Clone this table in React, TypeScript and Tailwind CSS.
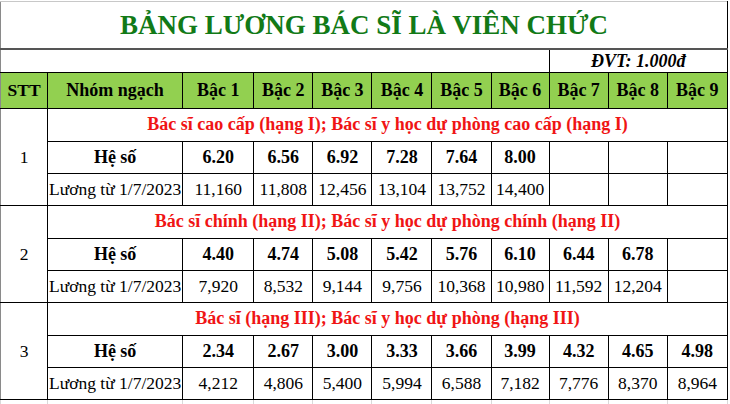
import React from "react";

type Group = {
  stt: string;
  title: string;
  heSo: string[];
  luong: string[];
};

const groups: Group[] = [
  {
    stt: "1",
    title: "Bác sĩ cao cấp (hạng I); Bác sĩ y học dự phòng cao cấp (hạng I)",
    heSo: ["6.20", "6.56", "6.92", "7.28", "7.64", "8.00", "", "", ""],
    luong: ["11,160", "11,808", "12,456", "13,104", "13,752", "14,400", "", "", ""],
  },
  {
    stt: "2",
    title: "Bác sĩ chính (hạng II); Bác sĩ y học dự phòng chính (hạng II)",
    heSo: ["4.40", "4.74", "5.08", "5.42", "5.76", "6.10", "6.44", "6.78", ""],
    luong: ["7,920", "8,532", "9,144", "9,756", "10,368", "10,980", "11,592", "12,204", ""],
  },
  {
    stt: "3",
    title: "Bác sĩ (hạng III); Bác sĩ y học dự phòng (hạng III)",
    heSo: ["2.34", "2.67", "3.00", "3.33", "3.66", "3.99", "4.32", "4.65", "4.98"],
    luong: ["4,212", "4,806", "5,400", "5,994", "6,588", "7,182", "7,776", "8,370", "8,964"],
  },
];

const colWidths = [47, 135, 71, 59, 59, 60, 59, 58, 59, 59, 60];
const bacs = ["Bậc 1", "Bậc 2", "Bậc 3", "Bậc 4", "Bậc 5", "Bậc 6", "Bậc 7", "Bậc 8", "Bậc 9"];

export default function App() {
  return (
    <div className="w-[730px] h-[404px] bg-white overflow-hidden pt-[1px] font-['Liberation_Serif',serif] text-black">
      <table className="table-fixed border-collapse w-[728px]">
        <colgroup>
          {colWidths.map((w, i) => (
            <col key={i} style={{ width: w }} />
          ))}
        </colgroup>
        <tbody>
          {/* Title */}
          <tr className="h-[47px]">
            <td
              colSpan={11}
              className="border-t border-t-[#c8c8c8] border-l border-l-[#8a8a8a] border-r border-r-black border-b-2 border-b-[#555] text-center align-middle text-[27px] font-bold text-[#127a17] leading-none pt-[2px]"
            >
              BẢNG LƯƠNG BÁC SĨ LÀ VIÊN CHỨC
            </td>
          </tr>

          {/* Unit row */}
          <tr className="h-[24px]">
            <td colSpan={8} className="border-l border-l-[#8a8a8a] border-b border-b-black" />
            <td
              colSpan={3}
              className="border-l border-black border-r border-b text-center text-[18px] font-bold italic leading-none"
            >
              ĐVT: 1.000đ
            </td>
          </tr>

          {/* Header */}
          <tr className="h-[36px] bg-[#92d050]">
            <td className="border border-black border-l-[#8a8a8a] text-center font-bold text-[17.5px]">STT</td>
            <td className="border border-black text-center font-bold text-[18px]">Nhóm ngạch</td>
            {bacs.map((b) => (
              <td key={b} className="border border-black text-center font-bold text-[18px] whitespace-nowrap">
                {b}
              </td>
            ))}
          </tr>

          {groups.map((g) => (
            <React.Fragment key={g.stt}>
              <tr className="h-[33px]">
                <td
                  rowSpan={3}
                  className="border border-black border-l-[#8a8a8a] text-center align-middle text-[17.5px] bg-white"
                >
                  {g.stt}
                </td>
                <td
                  colSpan={10}
                  className="border border-black text-center text-[18px] font-bold text-[#f01414] pb-[2px] whitespace-nowrap"
                >
                  {g.title}
                </td>
              </tr>
              <tr className="h-[32px]">
                <td className="border border-black text-center font-bold text-[18px]">Hệ số</td>
                {g.heSo.map((v, i) => (
                  <td key={i} className="border border-black text-center font-bold text-[18px]">
                    {v}
                  </td>
                ))}
              </tr>
              <tr className="h-[32px]">
                <td className="border border-black text-left pl-[1px] text-[17.5px] whitespace-nowrap">
                  Lương từ 1/7/2023
                </td>
                {g.luong.map((v, i) => (
                  <td key={i} className="border border-black text-center text-[17.5px] whitespace-nowrap">
                    {v}
                  </td>
                ))}
              </tr>
            </React.Fragment>
          ))}

          {/* faint spreadsheet gridlines below */}
          <tr className="h-[8px]">
            {colWidths.map((_, i) => (
              <td key={i} className="border-x border-x-[#d9d9d9] border-t border-t-black" />
            ))}
          </tr>
        </tbody>
      </table>
    </div>
  );
}
